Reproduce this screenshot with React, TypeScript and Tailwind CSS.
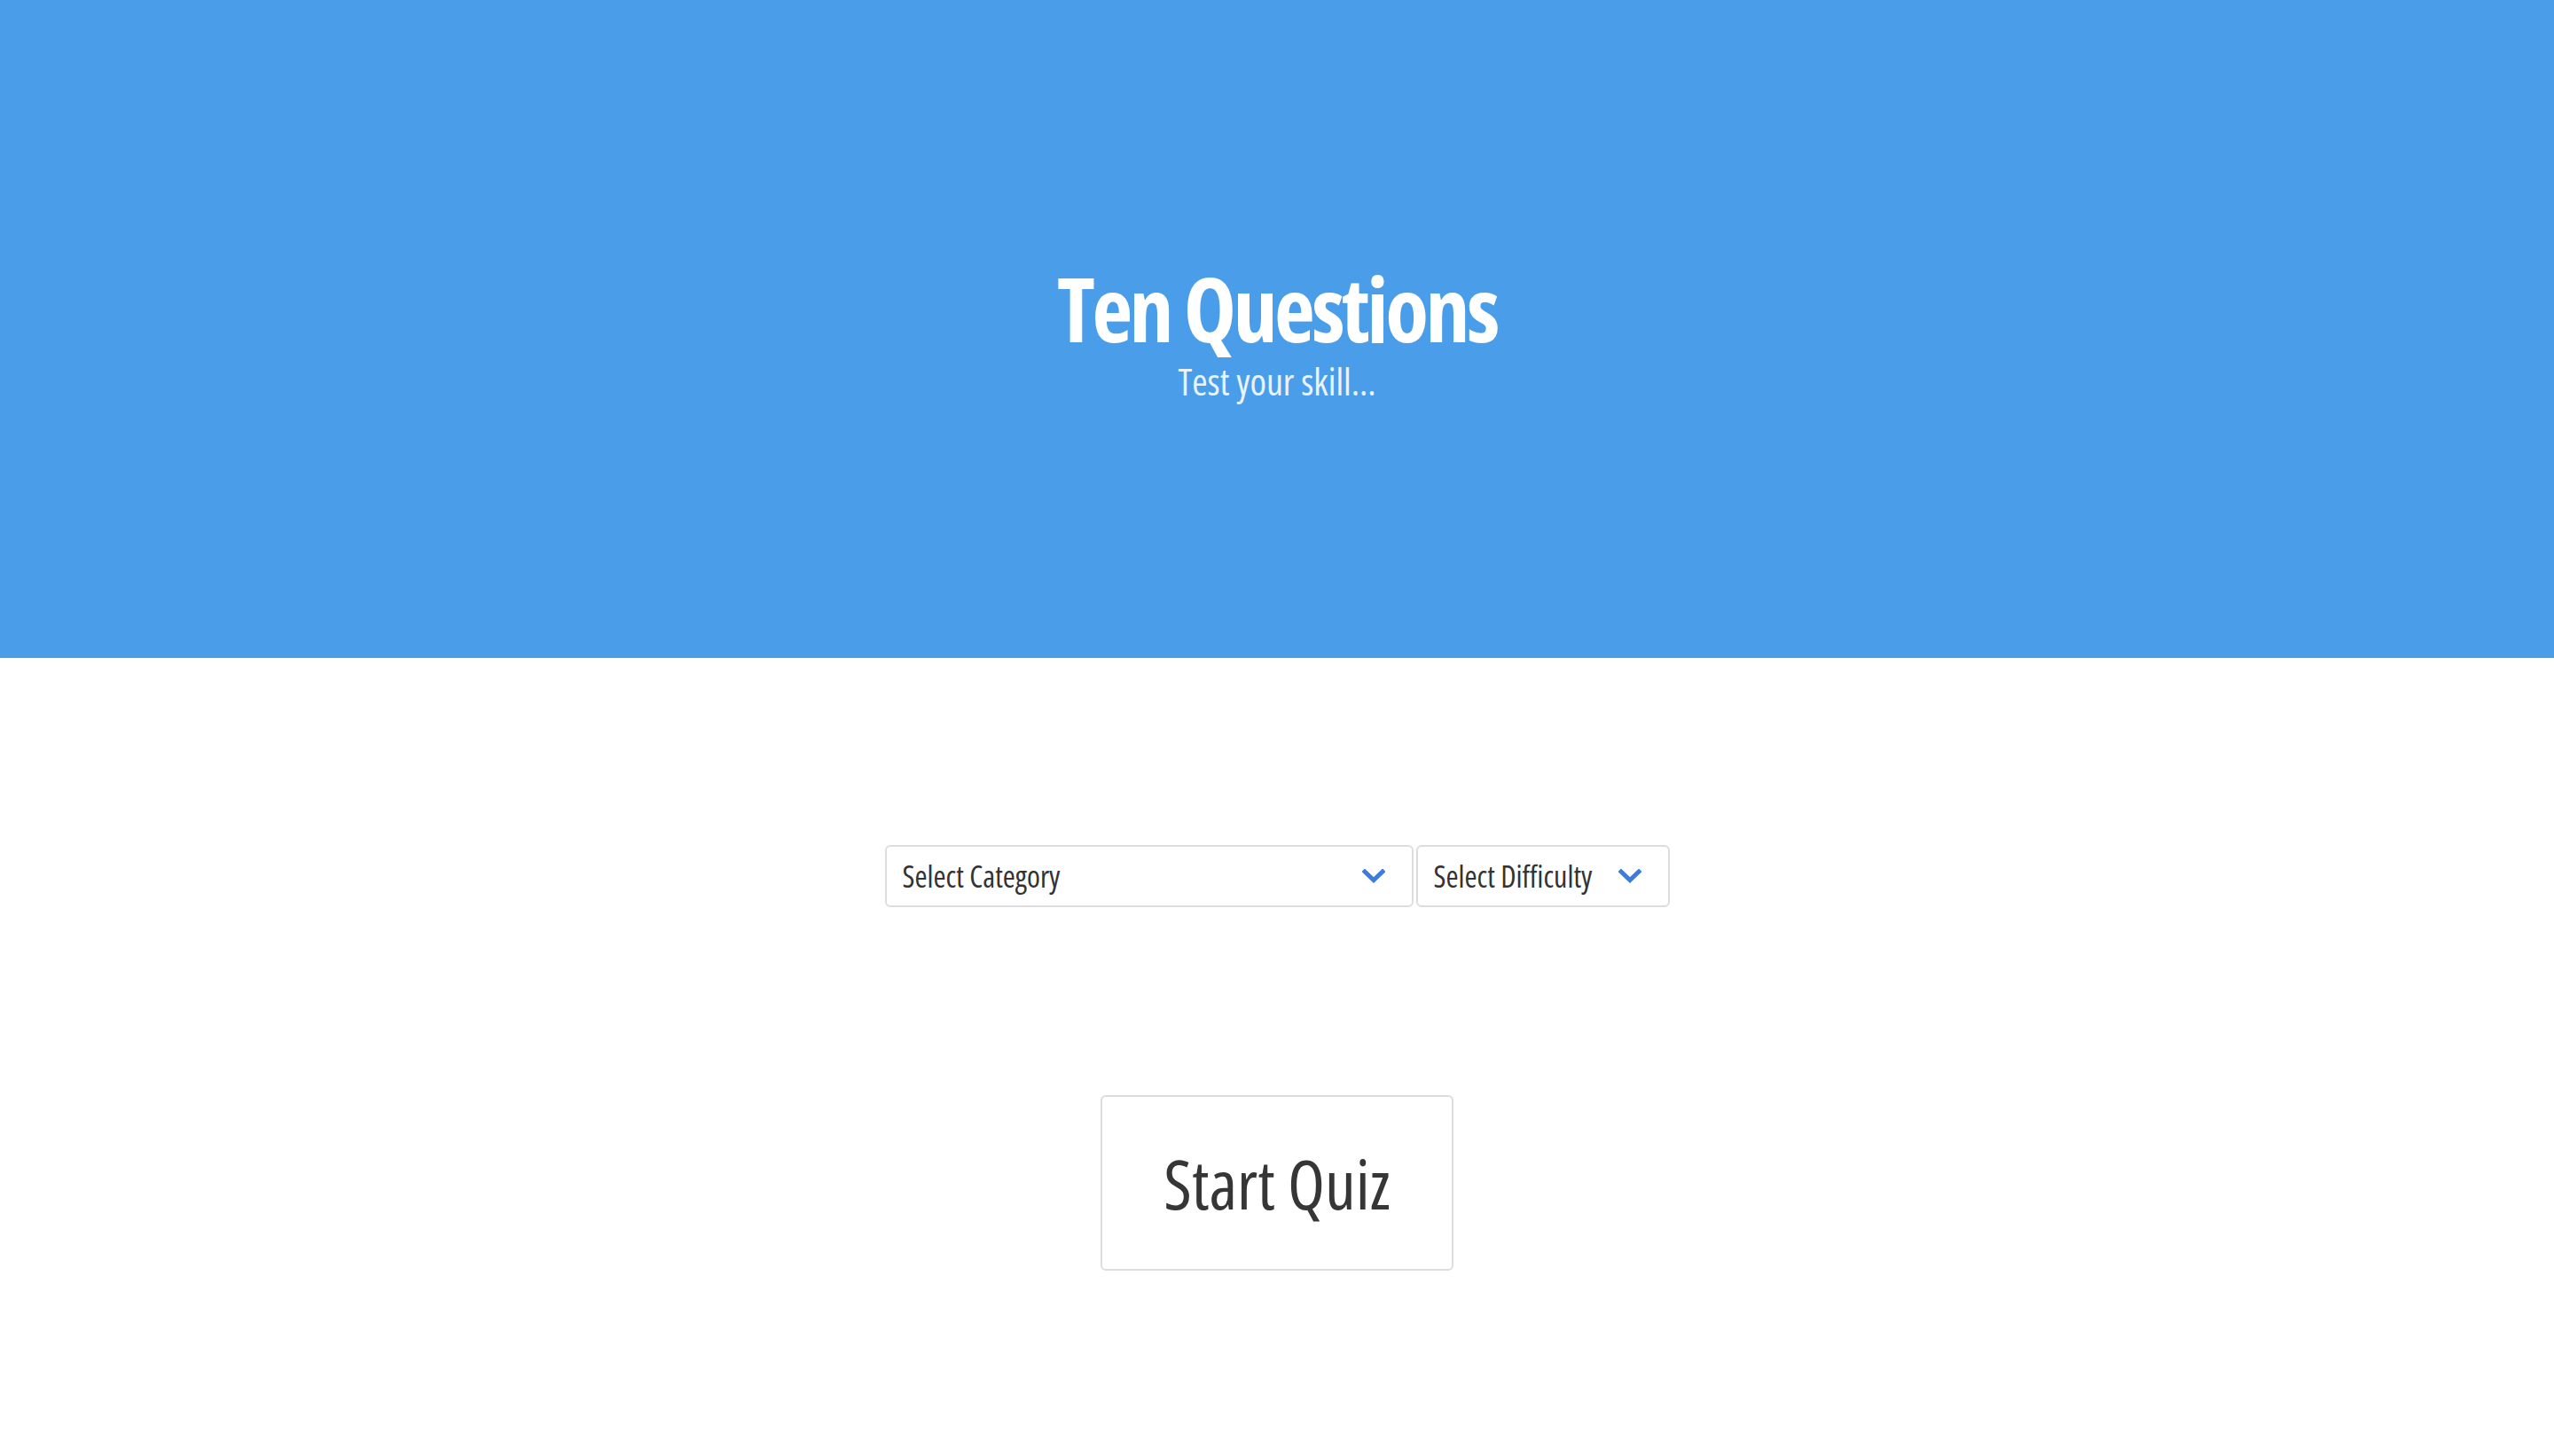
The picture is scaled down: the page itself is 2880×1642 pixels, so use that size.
const Chevron = () => (
  <svg width="26" height="16" viewBox="0 0 26 16" fill="none" className="shrink-0">
    <polyline points="3,3 13,12.5 23,3" stroke="#3d7bdc" strokeWidth="5" strokeLinecap="square" />
  </svg>
)

interface SelectBoxProps {
  label: string
  width: string
}

const SelectBox = ({ label, width }: SelectBoxProps) => (
  <button
    className={`${width} h-[70px] flex items-center justify-between pl-[18px] pr-[30px] border-2 border-[#dddddd] rounded-[6px] bg-white text-[#333333] text-[34px] leading-none`}
  >
    <span>{label}</span>
    <Chevron />
  </button>
)

export default function App() {
  return (
    <div className="min-h-screen bg-white font-['Open_Sans',_'Roboto',_sans-serif] font-stretch-condensed">
      {/* Header */}
      <header className="h-[742px] bg-[#4a9de8] flex flex-col items-center pt-[297px] text-white">
        <h1 className="text-[100px] font-bold leading-none tracking-[-0.035em]">Ten Questions</h1>
        <p className="mt-[12px] text-[42px] leading-none text-[#eaf3fd]">Test your skill...</p>
      </header>

      {/* Options */}
      <main className="flex flex-col items-center pt-[211px]">
        <div className="flex gap-[3px]">
          <SelectBox label="Select Category" width="w-[596px]" />
          <SelectBox label="Select Difficulty" width="w-[286px]" />
        </div>

        <button className="mt-[212px] w-[398px] h-[198px] flex items-center justify-center border-2 border-[#dddddd] rounded-[6px] bg-white text-[#363636] text-[77px] leading-none">
          Start Quiz
        </button>
      </main>
    </div>
  )
}
